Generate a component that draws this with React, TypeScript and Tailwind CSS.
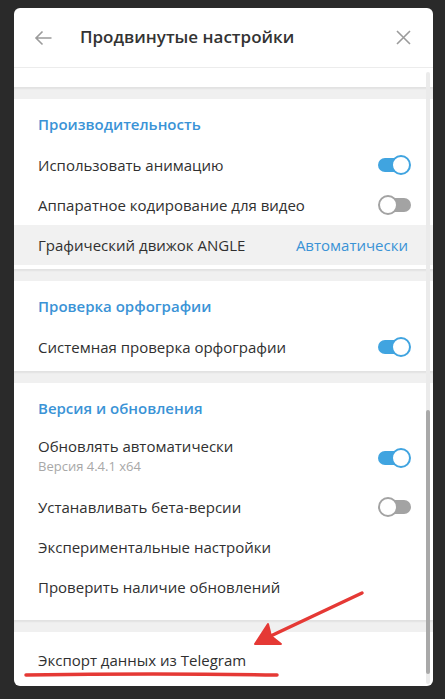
import React from "react";

const font = { fontFamily: '"Open Sans", "Noto Sans", sans-serif' };

function Toggle({ on }: { on: boolean }) {
  return on ? (
    <div className="relative w-[33px] h-[20px]">
      <div className="absolute left-0 top-[3px] w-[30px] h-[14px] rounded-full bg-[#40a4e0]" />
      <div className="absolute right-0 top-0 w-[20px] h-[20px] rounded-full bg-white border-2 border-[#40a4e0]" />
    </div>
  ) : (
    <div className="relative w-[33px] h-[20px]">
      <div className="absolute right-0 top-[3px] w-[28px] h-[14px] rounded-full bg-[#a3a3a3]" />
      <div className="absolute left-0 top-0 w-[20px] h-[20px] rounded-full bg-white border-2 border-[#a3a3a3]" />
    </div>
  );
}

function Row({
  label,
  toggle,
  value,
  highlight,
}: {
  label: string;
  toggle?: boolean;
  value?: string;
  highlight?: boolean;
}) {
  return (
    <div
      className={`h-[40px] flex items-center justify-between pl-[24px] ${
        value ? "pr-[25px]" : "pr-[22px]"
      } ${highlight ? "bg-[#f1f1f1]" : ""}`}
    >
      <span className="text-[15px] text-[#303030]">{label}</span>
      {toggle !== undefined && <Toggle on={toggle} />}
      {value && <span className="text-[15px] text-[#3a93d6]">{value}</span>}
    </div>
  );
}

function Heading({ text }: { text: string }) {
  return (
    <div className="h-[46px] pt-[13px] pl-[24px]">
      <div className="h-[24px] flex items-center text-[15px] font-semibold text-[#3a93d6]">
        {text}
      </div>
    </div>
  );
}

function Gap() {
  return (
    <div className="h-[12px] bg-[#f0f0f0] shadow-[inset_0_2px_2px_rgba(0,0,0,0.06)]" />
  );
}

export default function App() {
  return (
    <div className="w-[445px] h-[699px] bg-[#2a2a2a] pt-[8px] pl-[14px]" style={font}>
      <div className="relative w-[419px] h-[678px] bg-white rounded-[6px] overflow-hidden">
        {/* Header */}
        <div className="h-[60px] flex items-center border-b border-[#ececec]">
          <div className="w-[66px] flex items-center pl-[20px]">
            <svg width="18" height="16" viewBox="0 0 18 16" fill="none">
              <path d="M17.5 8H2M8.5 1.5L2 8l6.5 6.5" stroke="#9b9b9b" strokeWidth="1.6" />
            </svg>
          </div>
          <div className="flex-1 text-[17px] font-semibold text-[#333333] -mt-[1px]">
            Продвинутые настройки
          </div>
          <div className="pr-[22px] flex items-center">
            <svg width="15" height="15" viewBox="0 0 15 15" fill="none">
              <path d="M1 1l13 13M14 1L1 14" stroke="#9b9b9b" strokeWidth="1.6" />
            </svg>
          </div>
        </div>
        <div className="h-[19px]" />
        <Gap />

        {/* Section 1 */}
        <div className="pb-[4px]">
          <Heading text="Производительность" />
          <Row label="Использовать анимацию" toggle={true} />
          <Row label="Аппаратное кодирование для видео" toggle={false} />
          <Row label="Графический движок ANGLE" value="Автоматически" highlight />
        </div>
        <Gap />

        {/* Section 2 */}
        <div className="pb-[4px]">
          <Heading text="Проверка орфографии" />
          <Row label="Системная проверка орфографии" toggle={true} />
        </div>
        <Gap />

        {/* Section 3 */}
        <div className="pb-[13px]">
          <Heading text="Версия и обновления" />
          <div className="h-[58px] flex items-center justify-between pl-[24px] pr-[22px]">
            <div className="flex flex-col -mt-[6px]">
              <span className="text-[15px] leading-[22px] text-[#303030]">
                Обновлять автоматически
              </span>
              <span className="text-[13px] leading-[18px] text-[#a8a8a8]">
                Версия 4.4.1 x64
              </span>
            </div>
            <Toggle on={true} />
          </div>
          <Row label="Устанавливать бета-версии" toggle={false} />
          <Row label="Экспериментальные настройки" />
          <Row label="Проверить наличие обновлений" />
        </div>
        <Gap />

        {/* Section 4 */}
        <div className="pt-[8px]">
          <Row label="Экспорт данных из Telegram" />
        </div>

        {/* Scrollbar */}
        <div className="absolute left-[412px] top-[64px] w-[4px] h-[612px] rounded-full bg-[#ebebeb]">
          <div className="absolute left-0 top-[338px] w-[4px] h-[264px] rounded-full bg-[#a9a9a9]" />
        </div>

        {/* Annotation */}
        <svg
          className="absolute left-0 top-0 pointer-events-none"
          width="419"
          height="678"
          viewBox="0 0 419 678"
        >
          <path
            d="M348 585 L246 633"
            stroke="#e53935"
            strokeWidth="3.5"
            strokeLinecap="round"
            fill="none"
          />
          <path d="M241 636 L254 616 L257 628 L267 636 Z" fill="#e53935" stroke="#e53935" strokeWidth="2" strokeLinejoin="round" />
          <path
            d="M12 667 Q140 665 263 667"
            stroke="#e53935"
            strokeWidth="3.5"
            strokeLinecap="round"
            fill="none"
          />
        </svg>
      </div>
    </div>
  );
}
